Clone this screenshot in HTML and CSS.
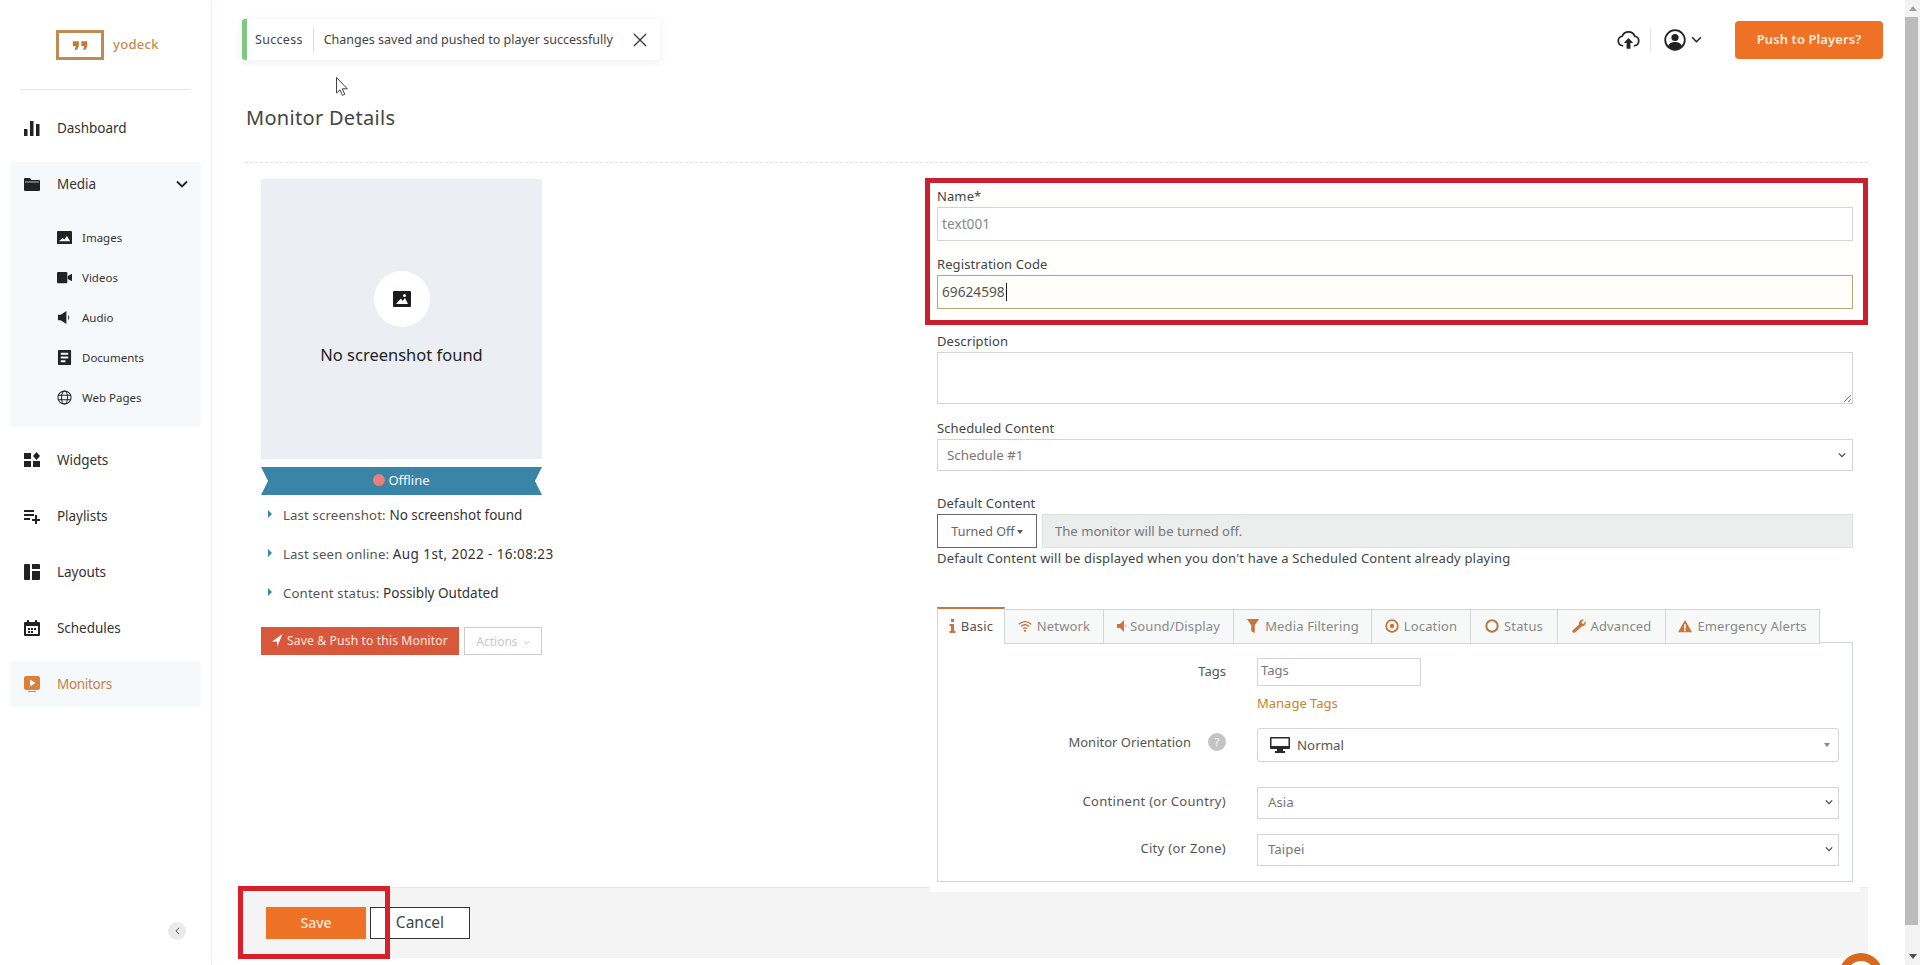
FILE: index.html
```html
<!DOCTYPE html>
<html lang="en">
<head>
<meta charset="utf-8">
<title>Monitor Details</title>
<link rel="stylesheet" href="styles.css">
</head>
<body>
<aside class="sidebar">
  <div class="brand">
    <div class="logo-box"><svg class="logo-quote" viewBox="0 0 20 10"><path d="M1 0h7v6l-2 4H3l1.500-4H1zM11 0h7v6l-2 4h-3l1.500-4H11z"/></svg></div>
    <span class="logo-text">yodeck</span>
  </div>
  <a class="nav-item first">
    <svg class="nav-icon" viewBox="0 0 16 16"><path d="M0 9h3.500v7H0zM6 1h3.500v15H6zM12 4h3.500v12H12z"/></svg>Dashboard
  </a>
  <div class="media-panel">
    <div class="media-head">
      <svg class="nav-icon" viewBox="0 0 16 16"><path d="M1 2h5l1.500 2H15a1 1 0 0 1 1 1v9a1 1 0 0 1-1 1H1a1 1 0 0 1-1-1V3a1 1 0 0 1 1-1z"/><path d="M1 6h14" stroke="#f6f9fb" stroke-width=".7"/></svg>Media
      <svg class="chev" viewBox="0 0 12 8"><path d="M1 1.500l5 5 5-5" fill="none" stroke="#222" stroke-width="1.800"/></svg>
    </div>
    <a class="sub-item"><svg class="sub-icon" viewBox="0 0 16 14"><path fill-rule="evenodd" d="M1 0h14a1 1 0 0 1 1 1v12a1 1 0 0 1-1 1H1a1 1 0 0 1-1-1V1a1 1 0 0 1 1-1zm1 11h12L10.500 5 8 9 6 7.500z"/></svg>Images</a>
    <a class="sub-item"><svg class="sub-icon" viewBox="0 0 16 14"><path d="M1 1h9a1 1 0 0 1 1 1v10a1 1 0 0 1-1 1H1a1 1 0 0 1-1-1V2a1 1 0 0 1 1-1zM11.500 5.500L16 3v8l-4.500-2.500z"/></svg>Videos</a>
    <a class="sub-item"><svg class="sub-icon" viewBox="0 0 16 16"><path d="M1 5h3l6-4v14l-6-4H1zM12 5c1.500 1.500 1.500 4.500 0 6z"/></svg>Audio</a>
    <a class="sub-item"><svg class="sub-icon" viewBox="0 0 14 16"><path fill-rule="evenodd" d="M1 0h12a1 1 0 0 1 1 1v14a1 1 0 0 1-1 1H1a1 1 0 0 1-1-1V1a1 1 0 0 1 1-1zm2 3v2h8V3zm0 4v2h8V7zm0 4v2h5v-2z"/></svg>Documents</a>
    <a class="sub-item"><svg class="sub-icon" viewBox="0 0 16 16"><g fill="none" stroke="#222" stroke-width="1.100"><circle cx="8" cy="8" r="7"/><ellipse cx="8" cy="8" rx="3.200" ry="7"/><path d="M1 5.500h14M1 10.500h14"/></g></svg>Web Pages</a>
  </div>
  <a class="nav-item gap">
    <svg class="nav-icon" viewBox="0 0 16 16"><path d="M0 1h7v6H0zM0 9h7v6H0zM9 9h7v6H9zM12.500 0L16 4l-3.500 4L9 4z"/></svg>Widgets
  </a>
  <a class="nav-item gap">
    <svg class="nav-icon" viewBox="0 0 16 16"><path d="M0 2h10v2H0zM0 6h10v2H0zM0 10h6v2H0zM11 7h2v4h3v2h-3v3h-2v-3H8v-2h3z"/></svg>Playlists
  </a>
  <a class="nav-item gap">
    <svg class="nav-icon" viewBox="0 0 16 16"><path d="M1 0h4a1 1 0 0 1 1 1v14a1 1 0 0 1-1 1H1a1 1 0 0 1-1-1V1a1 1 0 0 1 1-1zM8 0h7a1 1 0 0 1 1 1v4H8zM8 7h8v8a1 1 0 0 1-1 1H8z"/></svg>Layouts
  </a>
  <a class="nav-item gap">
    <svg class="nav-icon" viewBox="0 0 16 16"><path fill-rule="evenodd" d="M3 0h2v2h6V0h2v2h2a1 1 0 0 1 1 1v12a1 1 0 0 1-1 1H1a1 1 0 0 1-1-1V3a1 1 0 0 1 1-1h2zM2 6v8h12V6zM4 8h2v2H4zM7 8h2v2H7zM10 8h2v2h-2zM4 11h2v2H4zM7 11h2v2H7z"/></svg>Schedules
  </a>
  <a class="nav-item gap active">
    <svg class="nav-icon" viewBox="0 0 16 16"><path fill="#d9823b" fill-rule="evenodd" d="M2 0h12a2 2 0 0 1 2 2v10a2 2 0 0 1-2 2H2a2 2 0 0 1-2-2V2a2 2 0 0 1 2-2zm4 3.500v7L11.500 7zM4 15h8v1H4z"/></svg>Monitors
  </a>
  <button class="collapse"><svg viewBox="0 0 6 10"><path d="M5 1L1 5l4 4" fill="none" stroke="#444" stroke-width="1.200"/></svg></button>
</aside>

<main class="main">
  <header class="topbar">
    <div class="toast">
      <span class="toast-title">Success</span>
      <span class="toast-text">Changes saved and pushed to player successfully</span>
      <svg class="toast-close" viewBox="0 0 14 14"><path d="M1 1l12 12M13 1L1 13" stroke="#333" stroke-width="1.300" fill="none"/></svg>
    </div>
    <div class="tools">
      <svg class="tool-cloud" viewBox="0 0 24 20"><path d="M6.500 16H6a5 5 0 0 1-.6-9.900A7 7 0 0 1 18.600 6.100 5 5 0 0 1 18 16h-.5" fill="none" stroke="#222" stroke-width="1.800"/><path d="M12 8l5 5h-3v6h-4v-6H7z" fill="#222"/></svg>
      <span class="tool-sep"></span>
      <svg class="tool-user" viewBox="0 0 22 22"><circle cx="11" cy="11" r="9.800" fill="none" stroke="#222" stroke-width="1.800"/><circle cx="11" cy="8.500" r="3.600" fill="#222"/><path d="M4 17.500c1-3.500 4-4.500 7-4.500s6 1 7 4.500C16 20.500 13 21 11 21s-5-.5-7-3.500z" fill="#222"/></svg>
      <svg class="tool-chev" viewBox="0 0 12 8"><path d="M1 1.500l5 5 5-5" fill="none" stroke="#222" stroke-width="1.800"/></svg>
      <button class="push-btn">Push to Players?</button>
    </div>
  </header>

  <h1 class="page-title">Monitor Details</h1>
  <div class="rule"></div>

  <div class="columns">
    <section class="left-col">
      <div class="shot">
        <div class="shot-circle"><svg viewBox="0 0 18 16"><path fill="#1c1c1c" fill-rule="evenodd" d="M1 0h16a1 1 0 0 1 1 1v14a1 1 0 0 1-1 1H1a1 1 0 0 1-1-1V1a1 1 0 0 1 1-1zm2 13h12l-3-6-2.500 3L8 7.500zM11.500 3a1.500 1.500 0 1 0 0 3 1.500 1.500 0 0 0 0-3z"/></svg></div>
        <p class="shot-text">No screenshot found</p>
      </div>
      <div class="ribbon"><span class="dot"></span>Offline</div>
      <ul class="facts">
        <li>Last screenshot: <b>No screenshot found</b></li>
        <li>Last seen online: <b class="stamp">Aug 1st, 2022 - 16:08:23</b></li>
        <li>Content status: <b>Possibly Outdated</b></li>
      </ul>
      <div class="left-actions">
        <button class="save-push"><svg viewBox="0 0 12 14"><path d="M11.500 0L0 8h5.500v6z" fill="#fff"/></svg>Save &amp; Push to this Monitor</button>
        <button class="actions">Actions <svg viewBox="0 0 10 6"><path d="M1 1l4 4 4-4" fill="none" stroke="#bbb" stroke-width="1.200"/></svg></button>
      </div>
    </section>

    <section class="right-col">
      <div class="red-group">
        <label class="label">Name*</label>
        <div class="input muted">text001</div>
        <label class="label second">Registration Code</label>
        <div class="input focused">69624598<span class="caret"></span></div>
      </div>
      <div class="form-rest">
        <label class="label desc-label">Description</label>
        <div class="textarea"><svg viewBox="0 0 10 10"><path d="M9 2L2 9M9 6L6 9" stroke="#777" stroke-width="1"/></svg></div>
        <label class="label sched-label">Scheduled Content</label>
        <div class="select sched">Schedule #1<svg viewBox="0 0 10 6"><path d="M1 1l4 4 4-4" fill="none" stroke="#444" stroke-width="1.500"/></svg></div>
        <label class="label default-label">Default Content</label>
        <div class="default-row">
          <button class="turned">Turned Off<i class="tri"></i></button>
          <div class="default-msg">The monitor will be turned off.</div>
        </div>
        <p class="help">Default Content will be displayed when you don't have a Scheduled Content already playing</p>

        <nav class="tabs">
          <a class="tab active w1"><svg class="tab-i small" viewBox="0 0 6 14"><path d="M1.500 0h3v3h-3zM0 5h4.500v7H6v2H0v-2h1.500V7H0z"/></svg><span class="dark">Basic</span></a>
          <a class="tab w2"><svg class="tab-i" viewBox="0 0 16 14"><g fill="none" stroke="#c8743a" stroke-width="1.700"><path d="M1 5c4-4 10-4 14 0M3.500 7.500c2.500-2.500 6.500-2.500 9 0M6 10c1-1 3-1 4 0"/></g><circle cx="8" cy="12.500" r="1.300"/></svg>Network</a>
          <a class="tab w3"><svg class="tab-i sound" viewBox="0 0 10 14"><path d="M0 5h3l4-4v12L3 9H0zM8.500 5c1 1 1 3 0 4z"/></svg>Sound/Display</a>
          <a class="tab w4"><svg class="tab-i" viewBox="0 0 14 16"><path d="M0 0h14L9 7v9l-4-2V7z"/></svg>Media Filtering</a>
          <a class="tab w5"><svg class="tab-i" viewBox="0 0 14 14"><circle cx="7" cy="7" r="5.800" fill="none" stroke="#c8743a" stroke-width="1.800"/><circle cx="7" cy="7" r="2.200"/></svg>Location</a>
          <a class="tab w6"><svg class="tab-i" viewBox="0 0 14 14"><circle cx="7" cy="7" r="5.700" fill="none" stroke="#b5793f" stroke-width="2"/></svg>Status</a>
          <a class="tab w7"><svg class="tab-i" viewBox="0 0 14 14"><path d="M.5 11.500L7 5.500C6.500 3 8 .5 11 .5l1 .2-2.500 2.300.5 1.500 1.500.5L13.700 2c.7 3-1 5.500-4 5.500L3 13.500c-1.500 1-3.500-.5-2.500-2z"/></svg>Advanced</a>
          <a class="tab w8"><svg class="tab-i" viewBox="0 0 16 14"><path fill-rule="evenodd" d="M8 0l8 14H0zM7 5v5h2V5zm0 6v2h2v-2z"/></svg>Emergency Alerts</a>
        </nav>
        <div class="tab-panel">
          <div class="row tags-row">
            <span class="row-label lift1">Tags</span>
            <div class="input tags-input">Tags</div>
          </div>
          <div class="row manage-row"><span></span><a class="manage">Manage Tags</a></div>
          <div class="row orient-row">
            <span class="row-label orient-label">Monitor Orientation<i class="qmark">?</i></span>
            <div class="select orient">
              <svg class="screen" viewBox="0 0 20 16"><path fill="#2a2a2a" d="M1 0h18a1 1 0 0 1 1 1v10a1 1 0 0 1-1 1h-6v2h2v2H5v-2h2v-2H1a1 1 0 0 1-1-1V1a1 1 0 0 1 1-1z"/><path fill="#fff" d="M1.500 1.500h17V9h-17z"/></svg>
              <span class="orient-text">Normal</span><i class="tri gray"></i>
            </div>
          </div>
          <div class="row cont-row">
            <span class="row-label lift2 wide">Continent (or Country)</span>
            <div class="select short">Asia<svg viewBox="0 0 10 6"><path d="M1 1l4 4 4-4" fill="none" stroke="#444" stroke-width="1.500"/></svg></div>
          </div>
          <div class="row city-row">
            <span class="row-label lift2 wide">City (or Zone)</span>
            <div class="select short">Taipei<svg viewBox="0 0 10 6"><path d="M1 1l4 4 4-4" fill="none" stroke="#444" stroke-width="1.500"/></svg></div>
          </div>
        </div>
      </div>
    </section>
  </div>

  <footer class="footer">
    <button class="btn-save">Save</button>
    <button class="btn-cancel">Cancel</button>
    <div class="red-mark"></div>
  </footer>

  <svg class="cursor" viewBox="0 0 12 19"><path d="M.5.500v15.500l3.500-3.200 2.500 5.500 2.300-1-2.500-5.500h5z" fill="#fff" stroke="#444" stroke-width="1"/></svg>
</main>

<div class="scrollbar">
  <span class="arrow up"></span>
  <span class="thumb"></span>
  <span class="arrow down"></span>
</div>
<div class="chat"><span class="chat-in"></span></div>
</body>
</html>
```

FILE: styles.css
```css
* { box-sizing: border-box; }
html, body { margin: 0; height: 965px; overflow: hidden; }
body {
  display: flex;
  position: relative;
  font-family: "Noto Sans", "Liberation Sans", sans-serif;
  font-size: 13px;
  color: #444;
  background: #fff;
}
button { font-family: inherit; cursor: pointer; }
p, h1, ul { margin: 0; padding: 0; }

/* Sidebar */
.sidebar {
  width: 212px;
  flex: none;
  display: flex;
  flex-direction: column;
  padding: 0 10px;
  border-right: 1px solid #f1f1f1;
  box-shadow: 4px 0 8px rgba(0,0,0,.015);
}
.brand {
  height: 90px;
  margin: 0 10px;
  padding: 30px 0 0 36px;
  display: flex;
  align-items: flex-start;
  border-bottom: 1px solid #e6e6e6;
}
.logo-box {
  width: 48px;
  height: 30px;
  border: 3px solid #c08a50;
  display: flex;
  align-items: center;
  justify-content: center;
}
.logo-quote { width: 17px; height: 9px; fill: #c07b3a; }
.logo-text {
  margin: 5px 0 0 9px;
  font-size: 13px;
  font-weight: 500;
  color: #c08a50;
  letter-spacing: .3px;
}
.nav-item {
  height: 46px;
  padding: 0 0 1px 14px;
  display: flex;
  align-items: center;
  font-size: 13.500px;
  letter-spacing: -.05px;
  color: #333;
  border-radius: 4px;
}
.nav-item.first { margin-top: 15px; }
.nav-item.gap { margin-top: 10px; }
.nav-item.active { background: #f6f9fb; color: #c4823f; letter-spacing: -.3px; }
.nav-icon { width: 16px; height: 16px; fill: #222; margin-right: 17px; flex: none; }
.media-panel {
  margin-top: 11px;
  height: 265px;
  background: #f6f9fb;
  border-radius: 4px;
}
.media-head {
  height: 44px;
  padding: 0 0 1px 14px;
  display: flex;
  align-items: center;
  font-size: 13.500px;
  letter-spacing: -.05px;
  color: #333;
}
.chev { width: 12px; height: 8px; margin-left: auto; margin-right: 13px; }
.sub-item {
  height: 40px;
  display: flex;
  align-items: center;
  padding: 0 0 2px 47px;
  font-size: 11.500px;
  color: #333;
}
.media-head + .sub-item { margin-top: 12px; }
.sub-icon { width: 15px; height: 15px; fill: #222; margin-right: 10px; flex: none; }
.collapse {
  margin: auto 15px 25px auto;
  width: 18px;
  height: 18px;
  padding: 0;
  border: 0;
  border-radius: 50%;
  background: #e8ecee;
  display: flex;
  align-items: center;
  justify-content: center;
}
.collapse svg { width: 5px; height: 8px; }

/* Main */
.main { flex: 1; position: relative; min-width: 0; }
.topbar {
  height: 104px;
  padding: 19px 22px 0 30px;
  display: flex;
  align-items: flex-start;
}
.toast {
  width: 418px;
  height: 41px;
  display: flex;
  align-items: center;
  border-left: 5px solid #80c784;
  border-radius: 3px;
  background: #fff;
  box-shadow: 0 2px 10px rgba(0,0,0,.07);
  padding-left: 8px;
  font-size: 12.500px;
  color: #444;
}
.toast-title { padding-right: 10px; border-right: 1px solid #ddd; line-height: 24px; letter-spacing: .3px; }
.toast-text { padding-left: 10px; }
.toast-close { width: 14px; height: 14px; margin-left: 20px; }
.tools { margin-left: auto; display: flex; align-items: center; height: 39px; margin-top: 1px; }
.tool-cloud { width: 23px; height: 20px; margin-right: 10px; }
.tool-sep { width: 1px; height: 24px; background: #e2e2e2; margin-right: 13px; }
.tool-user { width: 22px; height: 22px; margin-right: 5px; }
.tool-chev { width: 11px; height: 7px; margin-right: 33px; }
.push-btn {
  width: 148px;
  height: 38px;
  border: 0;
  border-radius: 4px;
  background: #ef7125;
  color: #fdeadb;
  font-size: 13px;
  font-weight: 600;
  letter-spacing: .1px;
  padding: 0 0 2px;
}
.page-title {
  margin-left: 34px;
  font-size: 20px;
  line-height: 28px;
  font-weight: 400;
  color: #444;
  letter-spacing: .3px;
}
.rule { margin: 30px 37px 0 33px; border-top: 1px dashed #e2e2e2; }
.columns {
  display: grid;
  grid-template-columns: 281px 943px;
  column-gap: 383px;
  margin: 15px 0 0 49px;
}

/* Left column */
.shot {
  height: 280px;
  margin-top: 1px;
  background: #ebeff3;
  display: flex;
  flex-direction: column;
  align-items: center;
  padding-top: 92px;
}
.shot-circle {
  width: 56px;
  height: 56px;
  border-radius: 50%;
  background: #fff;
  display: flex;
  align-items: center;
  justify-content: center;
}
.shot-circle svg { width: 18px; height: 16px; }
.shot-text { margin-top: 16px; font-size: 16.500px; line-height: 24px; color: #222; }
.ribbon {
  height: 28px;
  margin-top: 8px;
  padding-bottom: 2px;
  background: #3a84a8;
  color: #f2fbff;
  display: flex;
  align-items: center;
  justify-content: center;
  font-size: 13px;
  clip-path: polygon(0 0, 100% 0, 97.500% 50%, 100% 100%, 0 100%, 2.500% 50%);
}
.dot { width: 12px; height: 12px; border-radius: 50%; background: #e8807c; margin-right: 3px; }
.facts { list-style: none; }
.facts li {
  height: 39px;
  display: flex;
  align-items: center;
  padding-left: 22px;
  position: relative;
  font-size: 13.200px;
  letter-spacing: .15px;
  color: #555;
  white-space: pre;
}
.facts li b { font-weight: 400; font-size: 13.500px; letter-spacing: 0; color: #333; }
.facts li b.stamp { letter-spacing: .42px; }
.facts li::before {
  content: "";
  position: absolute;
  left: 7px;
  top: 15px;
  border-left: 4px solid #3a84a8;
  border-top: 4px solid transparent;
  border-bottom: 4px solid transparent;
}
.left-actions { display: flex; gap: 5px; margin-top: 15px; }
.save-push {
  width: 198px;
  height: 28px;
  border: 0;
  background: #d9583b;
  color: #fde6dd;
  font-size: 12.200px;
  letter-spacing: .1px;
  display: flex;
  align-items: center;
  justify-content: center;
  padding: 0 0 1px;
}
.save-push svg { width: 11px; height: 13px; margin-right: 4px; }
.actions {
  width: 78px;
  height: 28px;
  border: 1px solid #ccc;
  background: #fff;
  color: #c8c8c8;
  font-size: 12px;
  padding: 0;
}
.actions svg { width: 7px; height: 5px; margin-left: 2px; vertical-align: 1px; }

/* Right column */
.red-group {
  height: 147px;
  border: 5px solid #c8202e;
  padding: 3px 10px 0 7px;
  background: #fffffd;
}
.label { display: block; height: 20px; line-height: 20px; margin-bottom: 1px; font-size: 13px; color: #444; letter-spacing: .1px; }
.label.second { margin-top: 13px; }
.input {
  height: 34px;
  line-height: 32px;
  padding-left: 4px;
  border: 1px solid #d4d4d4;
  background: #fff;
  font-size: 13.700px;
  color: #555;
}
.input.muted { color: #888; }
.input.focused { border-color: #b5a679; background: #fffefa; display: flex; align-items: center; }
.caret { width: 1px; height: 18px; background: #222; margin-left: 1px; }
.form-rest { padding: 0 15px 0 12px; }
.desc-label { margin: 6px 0 1px; }
.textarea {
  height: 52px;
  border: 1px solid #d4d4d4;
  display: flex;
  align-items: flex-end;
  justify-content: flex-end;
}
.textarea svg { width: 10px; height: 10px; }
.sched-label { margin-top: 14px; }
.select {
  border: 1px solid #d4d4d4;
  background: #fff;
  display: flex;
  align-items: center;
  color: #777;
  font-size: 13.300px;
}
.select svg { width: 8px; height: 6px; margin-left: auto; }
.sched { height: 32px; padding: 0 6px 0 9px; }
.default-label { margin-top: 22px; }
.default-row { display: flex; gap: 5px; height: 34px; }
.turned {
  width: 100px;
  border: 1px solid #666;
  background: #fff;
  color: #666;
  font-size: 12.500px;
  padding: 0;
}
.tri {
  display: inline-block;
  margin-left: 2px;
  vertical-align: 2px;
  border-top: 4px solid #555;
  border-left: 3.500px solid transparent;
  border-right: 3.500px solid transparent;
}
.tri.gray { margin-left: auto; border-top-color: #888; margin-right: 8px; }
.default-msg {
  flex: 1;
  background: #eceeee;
  border: 1px solid #e0e2e2;
  line-height: 32px;
  padding-left: 12px;
  color: #777;
  font-size: 13.100px;
}
.help { line-height: 20px; font-size: 13px; letter-spacing: .18px; color: #444; }

/* Tabs */
.tabs { display: flex; align-items: flex-end; margin-top: 39px; height: 37px; position: relative; z-index: 3; }
.tab {
  height: 35px;
  padding-bottom: 2px;
  display: flex;
  align-items: center;
  justify-content: center;
  background: #f7f9f8;
  border: 1px solid #d0d6d6;
  border-left: 0;
  color: #888;
  font-size: 13px;
  letter-spacing: .15px;
  white-space: nowrap;
}
.tab.active {
  height: 37px;
  background: #fff;
  border: 0;
  border-top: 2px solid #c8743a;
  border-left: 1px solid #d0d6d6;
  border-right: 1px solid #d0d6d6;
}
.dark { color: #555; }
.w1 { width: 68px; } .w2 { width: 99px; } .w3 { width: 130px; } .w4 { width: 138px; }
.w5 { width: 99px; } .w6 { width: 87px; } .w7 { width: 108px; } .w8 { width: 154px; }
.tab-i { width: 14px; height: 14px; fill: #c8743a; margin-right: 5px; flex: none; }
.tab-i.small { width: 7px; }
.tab-i.sound { width: 10px; margin-right: 3px; }
.tab-panel {
  height: 240px;
  margin-top: -2px;
  padding: 15px 13px 0 0;
  border: 1px solid #d0d6d6;
  background: #fff;
  position: relative;
  z-index: 2;
  box-shadow: 0 3px 0 7px #fff;
}
.row { display: grid; grid-template-columns: 288px 1fr; column-gap: 31px; align-items: center; }
.row-label { text-align: right; font-size: 13px; color: #555; }
.lift1 { padding-bottom: 2px; }
.lift2 { padding-bottom: 4px; }
.wide { letter-spacing: .3px; }
.tags-input { width: 164px; height: 28px; line-height: 22px; padding-left: 3px; color: #777; font-size: 13px; }
.manage-row { margin-top: 7px; height: 20px; }
.manage { color: #c4852f; font-size: 13px; }
.orient-row { margin-top: 15px; }
.orient-label { display: flex; justify-content: flex-end; align-items: center; padding-bottom: 7px; }
.qmark {
  width: 18px;
  height: 18px;
  margin-left: 17px;
  border-radius: 50%;
  background: #c4c4c4;
  color: #fff;
  font-style: normal;
  font-size: 11px;
  line-height: 18px;
  text-align: center;
}
.orient { height: 34px; padding-left: 12px; border-radius: 3px; color: #555; }
.select .screen { width: 20px; height: 16px; margin: 0 7px 0 0; }
.cont-row { margin-top: 25px; }
.city-row { margin-top: 15px; }
.short { height: 32px; padding: 0 5px 2px 10px; }

/* Footer */
.footer {
  position: absolute;
  left: 26px;
  right: 37px;
  top: 887px;
  height: 71px;
  background: #f4f4f4;
  border-top: 1px solid #e8e8e8;
  display: flex;
  gap: 4px;
  padding: 19px 0 0 28px;
}
.btn-save {
  width: 100px;
  height: 32px;
  border: 0;
  background: #ef7125;
  color: #fdeadb;
  font-size: 14px;
  font-weight: 500;
  padding: 0 0 2px;
}
.btn-cancel {
  width: 100px;
  height: 32px;
  border: 1px solid #333;
  background: #fff;
  color: #444;
  font-size: 15.500px;
  padding: 0 0 2px;
}
.red-mark {
  position: absolute;
  left: 0;
  top: -2px;
  width: 152px;
  height: 73px;
  border: 5px solid #d81f2a;
}
.cursor { position: absolute; left: 124px; top: 77px; width: 12px; height: 19px; }

/* Scrollbar */
.scrollbar { width: 15px; flex: none; background: #f3f3f3; display: flex; flex-direction: column; align-items: stretch; }
.arrow { height: 17px; display: flex; justify-content: center; align-items: center; }
.arrow::before { content: ""; border-left: 4px solid transparent; border-right: 4px solid transparent; }
.up::before { border-bottom: 5px solid #a0a0a0; }
.down::before { border-top: 5px solid #505050; }
.down { margin-top: auto; }
.thumb { height: 908px; background: #bcbcbc; margin-right: 2px; }

.chat {
  position: absolute;
  left: 1839px;
  top: 953px;
  width: 44px;
  height: 44px;
  border-radius: 50%;
  background: #d9691f;
  display: flex;
  align-items: center;
  justify-content: center;
}
.chat-in { width: 28px; height: 28px; border-radius: 50%; background: #fff; }
```
